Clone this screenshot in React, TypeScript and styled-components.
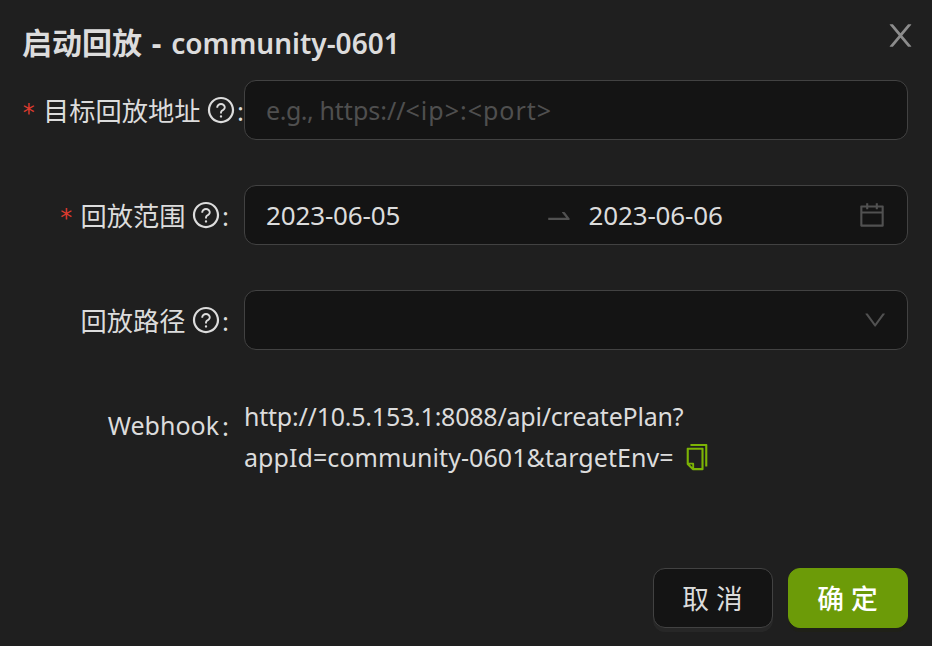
import React from "react";
import styled, { createGlobalStyle } from "styled-components";

const Global = createGlobalStyle`
  * { box-sizing: border-box; }
  body { margin: 0; background: #1f1f1f; }
`;
const Modal = styled.main`
  width: 932px; height: 646px; padding: 0 24px 18px 22px;
  display: flex; flex-direction: column;
  background: #1f1f1f; color: #dcdcdc;
  font: 26px/40px "Noto Sans", "Noto Sans CJK SC", sans-serif;
`;
const Header = styled.header`
  height: 80px; display: flex; justify-content: space-between; align-items: flex-start;
`;
const Title = styled.h1`
  margin: 21px 0 0; font-size: 28px; line-height: 44px; font-weight: 600; white-space: pre;
`;
const TitleAction = styled.span`
  font-size: 30px; font-weight: 700; word-spacing: 2px;
`;
const Close = styled.button`
  margin: 18px -10px 0 0; padding: 0; border: 0; background: none; display: flex; color: #8c8c8c;
`;
const Form = styled.form`
  display: grid; grid-template-columns: 222px 664px; row-gap: 45px;
`;
const Label = styled.label`
  height: 60px; display: flex; align-items: center; justify-content: flex-end; white-space: nowrap;
`;
const LabelText = styled.span`
  font-size: 26.25px; padding-top: 2px;
`;
const LatinLabel = styled.span`
  font-size: 25px;
`;
const Star = styled.span`
  color: #dc3a2e; font: 24px/40px "DejaVu Sans Mono", monospace; margin-right: 7px; padding-top: 6px;
`;
const Glyph = styled.svg<{ $size: number }>`
  width: ${p => p.$size}px; height: ${p => p.$size}px; flex: none; fill: currentColor;
`;
const HelpSlot = styled.span`
  display: flex; margin: 0 -2px 0 5.5px;
`;
const Colon = styled.span<{ $gap: number }>`
  margin: 0 ${p => p.$gap}px 0 3px; padding-top: 1px;
`;
const Field = styled.div`
  height: 60px; padding: 0 21px; border: 1px solid #424242; border-radius: 12px;
  background: #141414; display: flex; align-items: center;
`;
const Placeholder = styled.span`
  color: #4f4f4f; font-size: 25px; white-space: pre;
`;
const Tracked = styled.span<{ $by: number }>`
  letter-spacing: ${p => p.$by}px;
`;
const DateText = styled.span<{ $w: number }>`
  width: ${p => p.$w}px; letter-spacing: -0.15px;
`;
const Muted = styled.span<{ $left?: number; $right?: number; $top?: number }>`
  display: flex; color: #515151; padding-top: ${p => p.$top ?? 0}px;
  margin-left: ${p => p.$left ?? 0}px; margin-right: ${p => p.$right ?? 0}px;
`;
const Spacer = styled.span`flex: 1;`;
const Hook = styled.div`
  padding-top: 1px; font-size: 25px; line-height: 41px; white-space: nowrap;
`;
const HookLine = styled.div`
  display: flex; align-items: center;
`;
const Copy = styled.button`
  display: flex; margin: 0 0 2px 8px; padding: 0; border: 0; background: none; color: #7cb305;
`;
const Footer = styled.footer`
  margin-top: auto; display: flex; justify-content: flex-end; gap: 15px;
`;
const Button = styled.button<{ $primary?: boolean }>`
  width: 120px; height: 60px; padding: 2px 1px 0 0; border-radius: 12px;
  border: 1px solid ${p => (p.$primary ? "#6c9b08" : "#424242")};
  background: ${p => (p.$primary ? "#6c9b08" : "#141414")};
  color: ${p => (p.$primary ? "#fff" : "#dcdcdc")};
  box-shadow: 0 4px 0 ${p => (p.$primary ? "#20240f66" : "rgba(255,255,255,0.04)")};
  font: ${p => (p.$primary ? 500 : 400)} 26.75px/40px "Noto Sans", "Noto Sans CJK SC", sans-serif;
`;

const paths = {
  help: "M512 64C264.6 64 64 264.6 64 512s200.6 448 448 448 448-200.6 448-448S759.4 64 512 64zm0 820c-205.4 0-372-166.6-372-372s166.6-372 372-372 372 166.6 372 372-166.6 372-372 372zM623.6 316.7C593.6 290.4 554 276 512 276s-81.6 14.5-111.6 40.7C369.2 344 352 380.7 352 420v7.6c0 4.4 3.6 8 8 8h48c4.4 0 8-3.6 8-8V420c0-44.1 43.1-80 96-80s96 35.9 96 80c0 31.1-22 59.6-56.1 72.7-21.2 8.1-39.2 22.3-52.1 40.9-13.1 19-19.9 41.8-19.9 64.9V620c0 4.4 3.6 8 8 8h48c4.4 0 8-3.6 8-8v-22.7a48.3 48.3 0 0130.9-44.8c59-22.7 97.1-74.7 97.1-132.5.1-39.3-17.1-76-48.3-103.3zM472 732a40 40 0 1080 0 40 40 0 10-80 0z",
  calendar: "M880 184H712v-64c0-4.4-3.6-8-8-8h-56c-4.4 0-8 3.6-8 8v64H384v-64c0-4.4-3.6-8-8-8h-56c-4.4 0-8 3.6-8 8v64H144c-17.7 0-32 14.3-32 32v664c0 17.7 14.3 32 32 32h736c17.7 0 32-14.3 32-32V216c0-17.7-14.3-32-32-32zm-40 656H184V460h656v380zM184 392V256h128v48c0 4.4 3.6 8 8 8h56c4.4 0 8-3.6 8-8v-48h256v48c0 4.4 3.6 8 8 8h56c4.4 0 8-3.6 8-8v-48h128v136H184z",
  arrow: "M873.1 596.2l-164-208A32 32 0 00684 376h-64.8c-6.7 0-10.4 7.7-6.3 13l144.3 183H152c-4.4 0-8 3.6-8 8v60c0 4.4 3.6 8 8 8h695.9c26.8 0 41.7-30.8 25.2-51.8z",
  down: "M884 256h-75c-5.1 0-9.9 2.5-12.9 6.6L512 654.2 227.9 262.6c-3-4.1-7.8-6.6-12.9-6.6h-75c-6.5 0-10.3 7.4-6.5 12.7l352.6 486.1c12.8 17.6 39 17.6 51.7 0l352.6-486.1c3.9-5.3.1-12.7-6.4-12.7z",
  close: "M563.8 512l262.5-312.9c4.4-5.2.7-13.1-6.1-13.1h-79.8c-4.7 0-9.2 2.1-12.3 5.7L511.6 449.8 295.1 191.7c-3-3.6-7.5-5.7-12.3-5.7H203c-6.8 0-10.5 7.9-6.1 13.1L459.4 512 196.9 824.9A7.95 7.95 0 00203 838h79.8c4.7 0 9.2-2.1 12.3-5.7l216.5-258.1 216.5 258.1c3 3.6 7.5 5.7 12.3 5.7h79.8c6.8 0 10.5-7.9 6.1-13.1L563.8 512z",
  copy: "M832 64H296c-4.4 0-8 3.6-8 8v56c0 4.4 3.6 8 8 8h496v688c0 4.4 3.6 8 8 8h56c4.4 0 8-3.6 8-8V96c0-17.7-14.3-32-32-32zM704 192H192c-17.7 0-32 14.3-32 32v530.7c0 8.5 3.4 16.6 9.4 22.6l173.3 173.3c2.2 2.2 4.7 4 7.4 5.5v1.9h4.2c3.5 1.3 7.2 2 11 2H704c17.7 0 32-14.3 32-32V224c0-17.7-14.3-32-32-32zM350 856.2L263.9 770H350v86.2zM664 888H414V746c0-22.1-17.9-40-40-40H232V264h432v624z",
};
const Icon = ({ name, size = 30 }: { name: keyof typeof paths; size?: number }) => (
  <Glyph $size={size} viewBox="0 0 1024 1024"><path d={paths[name]} /></Glyph>
);
const Help = () => <HelpSlot><Icon name="help" /></HelpSlot>;

export default function App() {
  return (
    <Modal>
      <Global />
      <Header>
        <Title><TitleAction>启动回放 - </TitleAction>community-0601</Title>
        <Close type="button" aria-label="关闭"><Icon name="close" size={35} /></Close>
      </Header>
      <Form>
        <Label><Star>*</Star><LabelText>目标回放地址</LabelText><Help /><Colon $gap={0}>:</Colon></Label>
        <Field>
          <Placeholder>
            <Tracked $by={-0.45}>e.g., </Tracked>https://<Tracked $by={1}>&lt;ip&gt;:&lt;port&gt;</Tracked>
          </Placeholder>
        </Field>
        <Label><Star>*</Star><LabelText>回放范围</LabelText><Help /><Colon $gap={15}>:</Colon></Label>
        <Field>
          <DateText $w={278}>2023-06-05</DateText>
          <Muted $right={14.5} $top={2}><Icon name="arrow" /></Muted>
          <DateText $w={200}>2023-06-06</DateText>
          <Spacer />
          <Muted $right={-1}><Icon name="calendar" /></Muted>
        </Field>
        <Label><LabelText>回放路径</LabelText><Help /><Colon $gap={15}>:</Colon></Label>
        <Field><Spacer /><Muted $right={-2.5}><Icon name="down" size={26.25} /></Muted></Field>
        <Label><LatinLabel>Webhook</LatinLabel><Colon $gap={15}>:</Colon></Label>
        <Hook>
          <HookLine><Tracked $by={-0.22}>http://10.5.153.1:8088/api/createPlan?</Tracked></HookLine>
          <HookLine><Tracked $by={0.07}>appId=community-0601&amp;targetEnv=</Tracked><Copy type="button" aria-label="复制"><Icon name="copy" /></Copy></HookLine>
        </Hook>
      </Form>
      <Footer><Button type="button">取 消</Button><Button type="button" $primary>确 定</Button></Footer>
    </Modal>
  );
}
